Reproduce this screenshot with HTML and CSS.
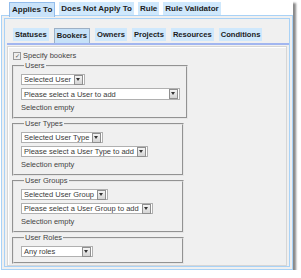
FILE: index.html
```html
<!DOCTYPE html>
<html lang="en">
<head>
	<meta charset="UTF-8">
	<title>Booking rule</title>
	<link rel="stylesheet" href="styles.css">
</head>
<body>
	<div class="screen">
		<div class="top_tabs">
			<a href="javascript:;" class="top_tab current">Applies To</a>
			<a href="javascript:;" class="top_tab">Does Not Apply To</a>
			<a href="javascript:;" class="top_tab">Rule</a>
			<a href="javascript:;" class="top_tab">Rule Validator</a>
		</div>
		<div class="panel">
			<div class="sub_tabs">
				<a href="javascript:;" class="sub_tab">Statuses</a>
				<a href="javascript:;" class="sub_tab current">Bookers</a>
				<a href="javascript:;" class="sub_tab">Owners</a>
				<a href="javascript:;" class="sub_tab">Projects</a>
				<a href="javascript:;" class="sub_tab">Resources</a>
				<a href="javascript:;" class="sub_tab">Conditions</a>
			</div>
			<div class="sub_line"></div>
			<div class="sub_body">
				<label class="check"><span class="check_box">&#10003;</span>Specify bookers</label>

				<fieldset class="group">
					<legend>Users</legend>
					<div class="select"><span class="select_text">Selected User</span><span class="select_btn"></span></div>
					<div class="select select_users"><span class="select_text">Please select a User to add</span><span class="select_btn"></span></div>
					<div class="empty">Selection empty</div>
				</fieldset>

				<fieldset class="group">
					<legend>User Types</legend>
					<div class="select"><span class="select_text">Selected User Type</span><span class="select_btn"></span></div>
					<div class="select"><span class="select_text">Please select a User Type to add</span><span class="select_btn"></span></div>
					<div class="empty">Selection empty</div>
				</fieldset>

				<fieldset class="group">
					<legend>User Groups</legend>
					<div class="select"><span class="select_text">Selected User Group</span><span class="select_btn"></span></div>
					<div class="select"><span class="select_text">Please select a User Group to add</span><span class="select_btn"></span></div>
					<div class="empty">Selection empty</div>
				</fieldset>

				<fieldset class="group group_last">
					<legend>User Roles</legend>
					<div class="select select_roles"><span class="select_text">Any roles</span><span class="select_btn"></span></div>
				</fieldset>
			</div>
		</div>
	</div>
</body>
</html>
```

FILE: styles.css
```css
body {
	margin: 0;
	padding: 0;
	background: #fff;
	font-family: "Liberation Sans", Arial, sans-serif;
	color: #222;
}

.screen {
	width: 292px;
	height: 270px;
	margin-left: 1px;
	background: #fff;
	box-shadow: 3px 3px 2px #8a8a8a;
}

/* top tabs */
.top_tabs {
	display: flex;
	gap: 4px;
	height: 13px;
	padding: 2px 0 0 8px;
}

.top_tab {
	display: block;
	height: 13px;
	line-height: 13px;
	padding: 0 2px;
	font-size: 8px;
	font-weight: bold;
	color: #1c1c1c;
	text-decoration: none;
	background: #cfe8fc;
}

.top_tab.current {
	height: 14px;
	border: 1px solid #93bdec;
	border-bottom: 0;
	background: #c9e3fa;
	position: relative;
	z-index: 1;
}

.panel {
	height: 255px;
	box-sizing: border-box;
	border: 4px double #a9d2f6;
	background: #f0f0f0;
	padding: 9px 0 0 0;
}

/* inner tabs */
.sub_tabs {
	display: flex;
	gap: 5px;
	height: 15px;
	padding-left: 8px;
	align-items: flex-start;
}

.sub_tab {
	display: block;
	height: 13px;
	line-height: 13px;
	padding: 0 2px;
	font-size: 7.6px;
	font-weight: bold;
	color: #1c1c1c;
	text-decoration: none;
	background: #cfe8fc;
}

.sub_tab.current {
	height: 14px;
	border: 1px solid #9cb0c6;
	border-bottom: 0;
	background: #c6e1f8;
}

.sub_line {
	height: 2px;
	margin: 0 0 0 2px;
	background: #a2b6f0;
}

.sub_body {
	height: 220px;
	box-sizing: border-box;
	margin: 1px 2px 0 2px;
	border: 1px solid #d6d6d6;
	box-shadow: inset 1px 1px 0 #fff;
	padding: 4px 0 0 4px;
	display: flex;
	flex-direction: column;
}

.check {
	display: flex;
	align-items: center;
	gap: 2px;
	height: 9px;
	padding-left: 1px;
	margin-bottom: 1px;
	font-size: 7.5px;
	color: #444;
}

.check_box {
	width: 6px;
	height: 6px;
	border: 1px solid #9a9a9a;
	background: #eee;
	font-size: 6px;
	line-height: 6px;
	text-align: center;
	color: #555;
}

/* fieldsets */
.group {
	width: 172px;
	box-sizing: border-box;
	margin: 0;
	padding: 4px 6px 4px 7px;
	border: 2px groove #e6e6e6;
	display: flex;
	flex-direction: column;
	align-items: flex-start;
	gap: 3px;
}

.group legend {
	padding: 0 1px;
	margin-left: 3px;
	font-size: 7.5px;
	line-height: 9px;
	color: #444;
}

.group_last { padding-bottom: 5px; }

.select {
	display: flex;
	align-items: center;
	height: 11px;
	box-sizing: border-box;
	border: 1px solid #b0b0b0;
	background: #fff;
	font-size: 7.5px;
	color: #3a3a3a;
}

.select_text {
	flex: 1;
	padding: 0 3px 0 2px;
	white-space: nowrap;
}

.select_btn {
	width: 7px;
	height: 8px;
	margin-right: 1px;
	border: 1px solid #8f8f8f;
	background: linear-gradient(#f4f4f4, #d4d4d4);
	position: relative;
}

.select_btn::after {
	content: "";
	position: absolute;
	left: 1px;
	top: 2px;
	border-style: solid;
	border-width: 3px 2.5px 0 2.5px;
	border-color: #333 transparent transparent transparent;
}

.select_users { width: 159px; height: 12px; }
.select_roles { width: 72px; }

.empty {
	height: 10px;
	line-height: 10px;
	font-size: 7.5px;
	color: #444;
}
```
